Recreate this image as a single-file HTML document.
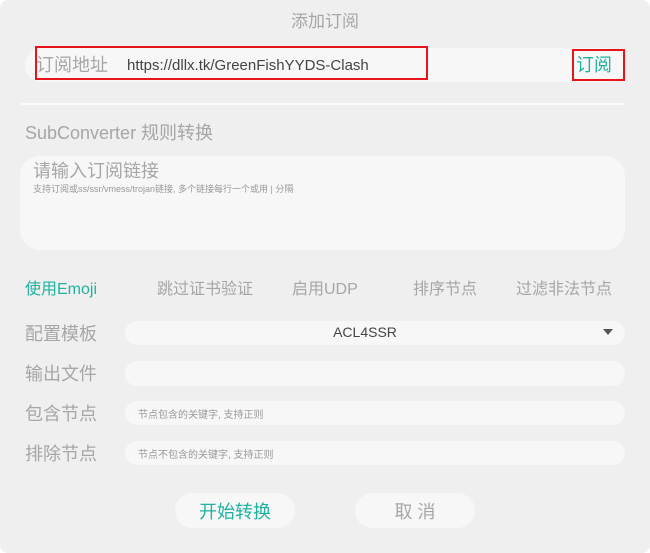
<!DOCTYPE html>
<html><head><meta charset="utf-8"><style>
*{margin:0;padding:0;box-sizing:border-box}
body{width:650px;height:553px;background:#fff;font-family:"Liberation Sans","Noto Sans CJK SC",sans-serif;position:relative;overflow:hidden}
.bg{position:absolute;left:0;top:0;width:650px;height:553px;background:#efefef;border-radius:8px}
.a{position:absolute;white-space:nowrap;line-height:1.2}
.f{position:absolute;background:#f7f7f7;border-radius:14px}
.g{color:#a6a6a6}
.t{color:#20b2a0}
.r{position:absolute;border:2px solid #e8141c}
</style></head><body><div class="bg"></div>
<div class="a g" style="left:0;width:650px;text-align:center;top:12px;font-size:17px">添加订阅</div>
<div class="f" style="left:25px;top:48px;width:600px;height:34px;border-radius:17px"></div>
<div class="a g" style="left:36px;top:55px;font-size:18px">订阅地址</div>
<div class="a" style="left:127px;top:57px;font-size:15px;color:#444">https://dllx.tk/GreenFishYYDS-Clash</div>
<div class="a t" style="left:576px;top:55px;font-size:18px">订阅</div>
<div class="r" style="left:35px;top:46px;height:34px;width:393px"></div>
<div class="r" style="left:572px;top:49px;width:53px;height:32px"></div>
<div class="a" style="left:20px;top:103px;width:605px;height:2px;background:#fafafa"></div>
<div class="a g" style="left:25px;top:123px;font-size:18px">SubConverter 规则转换</div>
<div class="f" style="left:20px;top:156px;width:605px;height:94px;border-radius:20px"></div>
<div class="a g" style="left:33px;top:161px;font-size:18px">请输入订阅链接</div>
<div class="a" style="left:33px;top:184px;font-size:9px;color:#999">支持订阅或ss/ssr/vmess/trojan链接, 多个链接每行一个或用 | 分隔</div>
<div class="a t" style="left:25px;top:280px;font-size:16px">使用Emoji</div>
<div class="a g" style="left:157px;top:280px;font-size:16px">跳过证书验证</div>
<div class="a g" style="left:292px;top:280px;font-size:16px">启用UDP</div>
<div class="a g" style="left:413px;top:280px;font-size:16px">排序节点</div>
<div class="a g" style="left:516px;top:280px;font-size:16px">过滤非法节点</div>
<div class="a g" style="left:25px;top:324px;font-size:18px">配置模板</div>
<div class="f" style="left:125px;top:321px;width:500px;height:24px;border-radius:12px"></div>
<div class="a" style="left:125px;width:480px;text-align:center;top:324px;font-size:14px;color:#444">ACL4SSR</div>
<div class="a" style="left:603px;top:329px;width:0;height:0;border-left:5px solid transparent;border-right:5px solid transparent;border-top:6px solid #555"></div>
<div class="a g" style="left:25px;top:364px;font-size:18px">输出文件</div>
<div class="f" style="left:125px;top:361px;width:500px;height:25px;border-radius:12px"></div>
<div class="a g" style="left:25px;top:404px;font-size:18px">包含节点</div>
<div class="f" style="left:125px;top:401px;width:500px;height:24px;border-radius:12px"></div>
<div class="a" style="left:138px;top:410px;font-size:10px;color:#999">节点包含的关键字, 支持正则</div>
<div class="a g" style="left:25px;top:444px;font-size:18px">排除节点</div>
<div class="f" style="left:125px;top:441px;width:500px;height:24px;border-radius:12px"></div>
<div class="a" style="left:138px;top:450px;font-size:10px;color:#999">节点不包含的关键字, 支持正则</div>
<div class="f" style="left:175px;top:493px;width:120px;height:35px;border-radius:18px"></div>
<div class="a t" style="left:175px;width:120px;text-align:center;top:502px;font-size:18px">开始转换</div>
<div class="f" style="left:355px;top:493px;width:120px;height:35px;border-radius:18px"></div>
<div class="a g" style="left:355px;width:120px;text-align:center;top:502px;font-size:18px">取 消</div>
</body></html>
